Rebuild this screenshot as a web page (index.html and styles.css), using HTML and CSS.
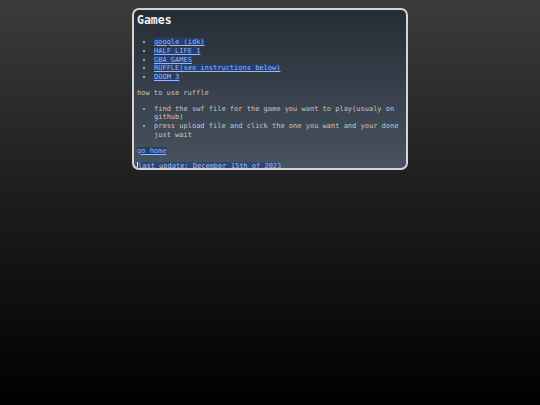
FILE: index.html
```html
<!DOCTYPE html>
<html lang="en">
<head>
<meta charset="utf-8">
<title>Games</title>
<link rel="stylesheet" href="styles.css">
</head>
<body>
<main class="card">
  <h1 class="title">Games</h1>
  <ul class="list">
    <li><a class="link" href="#">google (idk)</a></li>
    <li><a class="link" href="#">HALF LIFE 1</a></li>
    <li><a class="link" href="#">GBA GAMES</a></li>
    <li><a class="link" href="#">RUFFLE(see instructions below)</a></li>
    <li><a class="link" href="#">DOOM 3</a></li>
  </ul>
  <p class="text">how to use ruffle</p>
  <ul class="list">
    <li>find the swf file for the game you want to play(usualy on github)</li>
    <li>press upload file and click the one you want and your done just wait</li>
  </ul>
  <p class="text"><a class="link" href="#">go home</a></p>
  <p class="text last"><span class="update">last update: December 15th of 2023</span></p>
</main>
</body>
</html>
```
FILE: styles.css
```css
html {
  min-height: 100%;
  background: linear-gradient(#3b3b3b 0%, #1c1c1c 50%, #000 100%);
}
body {
  margin: 0;
  padding-top: 8px;
  font-family: "DejaVu Sans Mono", "Liberation Mono", monospace;
  font-size: 7px;
  line-height: 8.75px;
  color: #c4c6c9;
}
.card {
  box-sizing: border-box;
  width: 276px;
  height: 162px;
  margin: 0 auto;
  padding: 0 3px;
  border: 2px solid #d4d4d6;
  border-radius: 7px;
  background: linear-gradient(#262c35, #485361);
  overflow: hidden;
}
.title {
  margin: 3px 0 0;
  font-size: 11.5px;
  line-height: 14px;
  font-weight: bold;
  color: #f2f2f2;
}
.list {
  margin: 11px 0 7px;
  padding-left: 17px;
}
.text {
  margin: 7px 0;
}
.text + .list {
  margin-top: 6px;
}
.link {
  color: #9db7f2;
  background: #233f72;
  text-decoration: underline;
}
.last {
  margin-top: 7px;
}
.update {
  color: #a9bde6;
  background: #2a4577;
  border-left: 1px solid #f0f0f0;
}
```
